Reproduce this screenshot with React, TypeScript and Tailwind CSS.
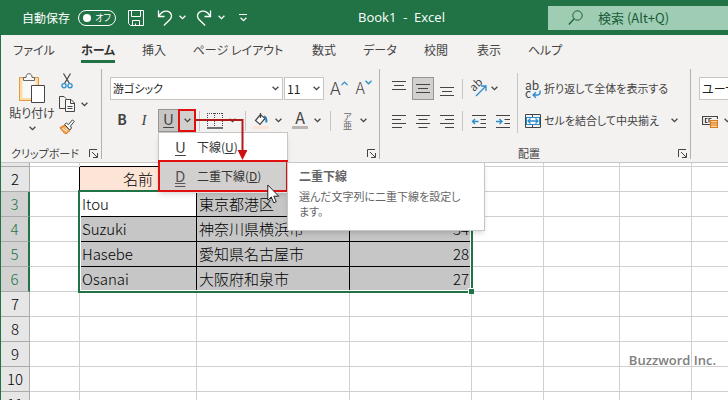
import type { ReactNode } from 'react';

interface Tab {
  label: string;
  width: string;
  active?: boolean;
}

const tabs: Tab[] = [
  { label: 'ファイル', width: 'w-[66px]' },
  { label: 'ホーム', width: 'w-[62px]', active: true },
  { label: '挿入', width: 'w-[50px]' },
  { label: 'ページ レイアウト', width: 'w-[118px]' },
  { label: '数式', width: 'w-[54px]' },
  { label: 'データ', width: 'w-[58px]' },
  { label: '校閲', width: 'w-[54px]' },
  { label: '表示', width: 'w-[52px]' },
  { label: 'ヘルプ', width: 'w-[60px]' },
];

const people = [
  { row: 3, name: 'Itou', address: '東京都港区', age: 25 },
  { row: 4, name: 'Suzuki', address: '神奈川県横浜市', age: 34 },
  { row: 5, name: 'Hasebe', address: '愛知県名古屋市', age: 28 },
  { row: 6, name: 'Osanai', address: '大阪府和泉市', age: 27 },
];

const emptyRows = [7, 8, 9, 10, 11];

interface IconProps {
  children: ReactNode;
  className?: string;
}

const Icon = ({ children, className = 'h-4 w-4' }: IconProps) => (
  <svg
    viewBox="0 0 16 16"
    fill="none"
    stroke="currentColor"
    className={`shrink-0 ${className}`}
    aria-hidden="true"
  >
    {children}
  </svg>
);

const Chevron = ({ className = '' }: { className?: string }) => (
  <svg
    viewBox="0 0 7 5"
    fill="none"
    stroke="currentColor"
    strokeWidth="1.3"
    className={`h-[5px] w-[7px] shrink-0 ${className}`}
    aria-hidden="true"
  >
    <path d="M.6.8 3.5 3.7 6.4.8" />
  </svg>
);

const Separator = ({ className = '' }: { className?: string }) => (
  <span className={`h-5 w-px shrink-0 bg-[#c8c6c4] ${className}`} />
);

interface GroupProps {
  label: string;
  className?: string;
  children: ReactNode;
}

const Group = ({ label, className = '', children }: GroupProps) => (
  <section
    aria-label={label}
    className={`flex h-[90px] shrink-0 flex-col justify-between border-r border-[#b3b0ad] pt-1 ${className}`}
  >
    {children}
    <div className="flex h-3 items-center pr-[2px]">
      <span className="flex-1 text-center text-[11px] leading-3 whitespace-nowrap">
        {label}
      </span>
      <button type="button" aria-label={`${label}の設定`} className="pr-px">
        <svg
          viewBox="0 0 9 9"
          fill="none"
          stroke="#444"
          className="h-[9px] w-[9px]"
          aria-hidden="true"
        >
          <path d="M.5 8V.5H8M3 3l5 5M8.5 4v4.5H4" />
        </svg>
      </button>
    </div>
  </section>
);

const TitleBar = () => (
  <header className="flex h-[35px] items-center bg-[#217346] text-white">
    <label className="flex items-center gap-2 pl-[21px] text-xs">
      自動保存
      <input type="checkbox" role="switch" className="sr-only" />
      <span className="flex h-4 w-[38px] items-center justify-between rounded-full border border-white pr-1 pl-1 text-[9px]">
        <span className="h-2 w-2 rounded-full bg-white" />
        オフ
      </span>
    </label>
    <button type="button" aria-label="上書き保存" className="ml-3">
      <Icon>
        <path d="M.5.5h15v15h-13l-2-2zM3.500.5v6h9v-6M4.500 15.500v-5h7v5M7.500 15.500v-2" />
      </Icon>
    </button>
    <button
      type="button"
      aria-label="元に戻す"
      className="ml-[13px] flex items-center gap-[6px]"
    >
      <Icon>
        <path
          strokeWidth="1.3"
          d="M1.5.5v6h6M1.7 6.300C4 2.500 7 .8 10 1.200c4.500.6 5.800 5.300 3 8.300l-6.200 6"
        />
      </Icon>
      <Chevron />
    </button>
    <button
      type="button"
      aria-label="やり直し"
      className="ml-[10px] flex items-center gap-[6px]"
    >
      <Icon>
        <path
          strokeWidth="1.3"
          d="M14.5.5v6h-6M14.300 6.300C12 2.500 9 .8 6 1.200 1.500 1.800.2 6.500 3 9.500l6.200 6"
        />
      </Icon>
      <Chevron />
    </button>
    <button
      type="button"
      aria-label="クイック アクセス ツール バーのユーザー設定"
      className="ml-[14px] flex flex-col items-center gap-[2px]"
    >
      <span className="h-px w-2 bg-white" />
      <Chevron />
    </button>
    <h1 className="flex-1 pl-2 text-center font-[Open_Sans,Noto_Sans_CJK_JP,sans-serif] text-[13px] whitespace-pre">
      Book1 {' -  '}Excel
    </h1>
    <label className="flex h-6 w-[180px] items-center bg-[#9fcdb3] pl-5 text-[#185c37]">
      <Icon>
        <circle cx="9.5" cy="5.5" r="4.700" />
        <path strokeWidth="1.2" d="M6 9 .8 14.500" />
      </Icon>
      <input
        type="text"
        aria-label="検索"
        placeholder="検索 (Alt+Q)"
        className="ml-[14px] w-full min-w-0 bg-transparent text-[13px] outline-none placeholder:text-[#185c37]"
      />
    </label>
  </header>
);

const Tabs = () => (
  <nav className="flex h-[30px] text-xs">
    {tabs.map((tab) => (
      <button
        key={tab.label}
        type="button"
        className={`flex shrink-0 flex-col items-center whitespace-nowrap ${tab.width}`}
      >
        <span
          className={
            tab.active
              ? 'border-b-3 border-[#217346] pt-[5px] leading-5 font-bold text-[#333]'
              : 'pt-[5px] leading-5'
          }
        >
          {tab.label}
        </span>
      </button>
    ))}
  </nav>
);

const ClipboardGroup = () => (
  <Group label="クリップボード" className="w-[101px]">
    <div className="flex pl-2">
      <button
        type="button"
        className="flex w-[46px] flex-col items-center text-xs leading-5 whitespace-nowrap"
      >
        <svg viewBox="0 0 28 30" fill="none" className="h-[30px] w-7">
          <path fill="#fcdca4" stroke="#dd9b3c" d="M1.5 4.500h19v23h-19z" />
          <path fill="#f8f8f8" d="M4.5 7h13v18h-13z" />
          <path
            fill="#f8f8f8"
            stroke="#666"
            d="M5.5 7.500v-3H8C8 2 9 .7 11 .7S14 2 14 4.500h2.500v3z"
          />
          <path fill="#fff" stroke="#444" d="M13.5 12.500h13v17h-13z" />
        </svg>
        貼り付け
        <Chevron className="mt-[3px]" />
      </button>
      <div className="ml-1 flex flex-col items-start gap-[7px]">
        <button type="button" aria-label="切り取り">
          <Icon>
            <path strokeWidth="1.2" d="M4.5.5l6 10M11.5.5l-6 10" />
            <circle cx="5" cy="12.7" r="2.1" stroke="#2b8dcb" strokeWidth="1.3" />
            <circle cx="11" cy="12.7" r="2.1" stroke="#2b8dcb" strokeWidth="1.3" />
          </Icon>
        </button>
        <button
          type="button"
          aria-label="コピー"
          className="flex items-center gap-[6px]"
        >
          <Icon>
            <path d="M6 12.500H.5V.5H5l2 2" />
            <path
              fill="#f8f8f8"
              d="M6.5 3.500H12L15.500 7v8.500h-9zM11.500 3.500v4h4M8.500 10.500h5M8.500 12.500h5"
            />
          </Icon>
          <Chevron />
        </button>
        <button type="button" aria-label="書式のコピー/貼り付け">
          <Icon>
            <path
              fill="#f0a050"
              stroke="#d97b20"
              d="M1 8.500 6 6l5 5.500-4 3.500C5 14 2.500 11.500 1 8.500z"
            />
            <path stroke="#fff" d="M3.5 9.500l4.500 3M6 8.500l3 3" />
            <path
              fill="#f8f8f8"
              d="M5.5 5.500 7.500 4l2 1.500L13.500.8l1.700 1.700L11.500 7l1 2-1.700 2z"
            />
          </Icon>
        </button>
      </div>
    </div>
  </Group>
);

const Tooltip = () => (
  <div
    role="tooltip"
    className="absolute top-[2px] left-[129px] h-[69px] w-[198px] border border-[#c8c6c4] bg-white pt-[5px] pr-[18px] pl-[11px] text-left whitespace-normal text-[#666] shadow-md"
  >
    <p className="text-xs leading-4 font-bold">二重下線</p>
    <p className="mt-[5px] text-[11px] leading-[15px]">
      選んだ文字列に二重下線を設定します。
    </p>
  </div>
);

const UnderlineMenu = () => (
  <div
    role="menu"
    className="absolute top-[23px] left-0 z-20 w-[130px] border border-[#c8c6c4] bg-white text-xs text-[#333] shadow-md"
  >
    <button
      type="button"
      role="menuitem"
      className="flex h-[27px] w-full items-center pl-4"
    >
      <span className="w-[22px] text-left text-[15px] text-[#444] underline underline-offset-2">
        U
      </span>
      <span>
        下線(<u>U</u>)
      </span>
    </button>
    <div className="relative -mx-px -mb-px">
      <button
        type="button"
        role="menuitem"
        className="flex h-8 w-full items-center border-2 border-[#e01010] bg-[#d2d0ce] pl-[15px]"
      >
        <span className="w-[22px] text-left text-[15px] text-[#555] underline decoration-double underline-offset-1">
          D
        </span>
        <span>
          二重下線(<u>D</u>)
        </span>
      </button>
      <Tooltip />
      <svg
        viewBox="0 0 13 20"
        className="absolute top-6 left-[109px] h-5 w-[13px]"
        aria-hidden="true"
      >
        <path
          fill="#fff"
          stroke="#222"
          d="M.8 1v15.200l3.500-3.200 2.400 5.800 2.500-1-2.400-5.600h4.900z"
        />
      </svg>
    </div>
  </div>
);

const UnderlineButton = () => (
  <div className="relative flex h-[23px]">
    <button
      type="button"
      aria-label="下線"
      className="w-5 border border-r-0 border-[#979593] bg-[#c8c6c4] pb-1 text-[15px] leading-4 underline underline-offset-2"
    >
      U
    </button>
    <button
      type="button"
      aria-label="下線のオプション"
      className="flex w-[18px] items-center justify-center border-2 border-[#e01010] bg-[#d2d0ce]"
    >
      <Chevron />
    </button>
    <UnderlineMenu />
    <svg
      viewBox="0 0 52 42"
      className="absolute top-[9px] left-[37px] z-30 h-[42px] w-[52px]"
      aria-hidden="true"
    >
      <path fill="none" stroke="#b01c1c" strokeWidth="2" d="M0 2h47.500v32" />
      <path fill="#d01010" d="M42.5 32h10l-5 10z" />
    </svg>
  </div>
);

const FontGroup = () => (
  <Group label="フォント" className="w-[278px]">
    <div className="flex flex-col gap-[9px] pt-1 pl-2">
      <div className="flex h-[23px] items-center">
        <label className="relative flex h-full w-[173px] items-center">
          <select
            aria-label="フォント"
            className="h-full w-full appearance-none border border-[#c8c6c4] bg-white pl-[2px] text-[11px] text-[#222]"
          >
            <option>游ゴシック</option>
          </select>
          <Chevron className="pointer-events-none absolute right-1" />
        </label>
        <label className="relative ml-px flex h-full w-10 items-center">
          <select
            aria-label="フォント サイズ"
            className="h-full w-full appearance-none border border-[#c8c6c4] bg-white pl-[2px] text-xs text-[#222]"
          >
            <option>11</option>
          </select>
          <Chevron className="pointer-events-none absolute right-1" />
        </label>
        <button
          type="button"
          aria-label="フォント サイズの拡大"
          className="ml-[6px] flex items-start pb-1 text-[18px] leading-4 font-light"
        >
          A
          <Icon className="h-[7px] w-[7px]">
            <path stroke="#2b8dcb" strokeWidth="3" d="M1 14l7-7 7 7" />
          </Icon>
        </button>
        <button
          type="button"
          aria-label="フォント サイズの縮小"
          className="ml-2 flex items-start pb-1 text-base leading-4 font-light"
        >
          A
          <Icon className="h-[7px] w-[7px]">
            <path stroke="#2b8dcb" strokeWidth="3" d="M1 4l7 7 7-7" />
          </Icon>
        </button>
      </div>
      <div className="flex h-[23px] items-center">
        <button
          type="button"
          aria-label="太字"
          className="w-6 pb-1 text-sm leading-4 font-bold"
        >
          B
        </button>
        <button
          type="button"
          aria-label="斜体"
          className="w-6 pr-1 font-[Liberation_Serif,serif] text-[15px] italic"
        >
          I
        </button>
        <UnderlineButton />
        <Separator className="ml-[3px]" />
        <button
          type="button"
          aria-label="罫線"
          className="ml-[7px] flex items-center gap-[6px]"
        >
          <Icon>
            <path
              strokeDasharray="1 1"
              d="M0 .5h16M0 7.500h16M.5 0v14M7.500 0v14M15.500 0v14"
            />
            <path strokeWidth="1.5" d="M0 15h16" />
          </Icon>
          <Chevron />
        </button>
        <Separator className="ml-[9px]" />
        <button
          type="button"
          aria-label="塗りつぶしの色"
          className="ml-[7px] flex items-center gap-[6px]"
        >
          <Icon>
            <path
              fill="#fff"
              strokeWidth="1.2"
              d="M7.5 1.500 2.500 7.500 7 11.500l5-6zM7.500 0v5"
            />
            <path
              stroke="#2b7fb5"
              strokeWidth="2"
              d="M11 3.500c2.200.5 2.700 2 2.300 6"
            />
            <path stroke="#fce4d6" strokeWidth="3" d="M0 14.500h16" />
          </Icon>
          <Chevron />
        </button>
        <button
          type="button"
          aria-label="フォントの色"
          className="ml-[10px] flex items-center gap-[6px]"
        >
          <span className="flex h-4 w-4 items-center justify-center border-b-3 border-[#b8b6b4] pb-1 text-base leading-3">
            A
          </span>
          <Chevron />
        </button>
        <Separator className="ml-[9px]" />
        <button
          type="button"
          aria-label="ふりがなの表示/非表示"
          className="ml-[10px] flex items-center gap-[6px]"
        >
          <span className="flex w-[13px] flex-col text-center text-[9px] leading-[9px] text-[#666]">
            <span>ア</span>
            <span>亜</span>
          </span>
          <Chevron />
        </button>
      </div>
    </div>
  </Group>
);

interface AlignButtonProps {
  label: string;
  d: string;
  pressed?: boolean;
  arrow?: string;
}

const AlignButton = ({ label, d, pressed, arrow }: AlignButtonProps) => (
  <button
    type="button"
    aria-label={label}
    aria-pressed={pressed}
    className={`flex h-[23px] w-[22px] items-center justify-center ${
      pressed ? 'border border-[#979593] bg-[#d2d0ce]' : ''
    }`}
  >
    <Icon>
      <path strokeWidth="1.2" d={d} />
      {arrow && <path stroke="#2b8dcb" strokeWidth="1.4" d={arrow} />}
    </Icon>
  </button>
);

const AlignmentGroup = () => (
  <Group label="配置" className="w-[311px]">
    <div className="flex pl-2">
      <div className="flex w-[130px] flex-col gap-[9px] border-r border-[#c8c6c4] pt-1 pb-px">
        <div className="flex items-center gap-[2px]">
          <AlignButton label="上揃え" d="M1 .5h14M3 4.500h10M1 8.500h14" />
          <AlignButton
            label="上下中央揃え"
            pressed
            d="M1 3.500h14M3 7.500h10M1 11.500h14"
          />
          <AlignButton label="下揃え" d="M1 6.500h14M3 10.500h10M1 14.500h14" />
          <Separator className="ml-[2px]" />
          <button
            type="button"
            aria-label="方向"
            className="ml-[5px] flex items-center gap-1"
          >
            <svg
              viewBox="0 0 17 17"
              fill="none"
              className="h-[17px] w-[17px]"
              aria-hidden="true"
            >
              <text
                x="4"
                y="12"
                fontSize="11"
                fill="#444"
                transform="rotate(-45 4 12)"
              >
                ab
              </text>
              <path
                stroke="#2b8dcb"
                strokeWidth="1.3"
                d="M6 16 15.500 6.500M11 6h5v5"
              />
            </svg>
            <Chevron />
          </button>
        </div>
        <div className="flex items-center gap-[2px]">
          <AlignButton
            label="左揃え"
            d="M1 2.500h14M1 6.500h9M1 10.500h14M1 14.500h10"
          />
          <AlignButton
            label="中央揃え"
            d="M1 2.500h14M3.500 6.500h9M1 10.500h14M3.500 14.500h9"
          />
          <AlignButton
            label="右揃え"
            d="M1 2.500h14M6 6.500h9M1 10.500h14M6 14.500h9"
          />
          <Separator className="ml-[2px]" />
          <span className="w-px" />
          <AlignButton
            label="インデントを減らす"
            d="M1 2.500h14M9.500 6.500H15M9.500 10.500H15M1 14.500h14"
            arrow="M7.5 8.500h-6M4 6 1.500 8.500 4 11"
          />
          <AlignButton
            label="インデントを増やす"
            d="M1 2.500h14M9.500 6.500H15M9.500 10.500H15M1 14.500h14"
            arrow="M1 8.500h6M4.500 6 7 8.500 4.500 11"
          />
        </div>
      </div>
      <div className="flex flex-col gap-[9px] pt-1 pl-[7px] text-[11px]">
        <button
          type="button"
          className="flex h-[23px] items-center gap-[3px] whitespace-nowrap"
        >
          <span className="relative w-4 text-left text-xs leading-[8px]">
            <span className="block">ab</span>
            <span className="block">c</span>
            <Icon className="absolute right-0 bottom-[-2px] h-[9px] w-[9px]">
              <path
                stroke="#2b8dcb"
                strokeWidth="2.5"
                d="M14 1c1.500 5-1 8-5 8H2M7 4 2 9l5 5"
              />
            </Icon>
          </span>
          折り返して全体を表示する
        </button>
        <button
          type="button"
          className="flex h-[23px] items-center gap-[3px] whitespace-nowrap"
        >
          <Icon>
            <path d="M.5 1.500h15v13H.5zM.5 4.500h15M.5 11.500h15M7.500 1.500v3M7.500 11.500v3" />
            <path fill="#fff" stroke="#2b8dcb" d="M1.5 4.500h13v7h-13z" />
            <path
              stroke="#2b8dcb"
              strokeWidth="1.3"
              d="M3 8h10M5.500 5.500 3 8l2.500 2.500M10.500 5.500 13 8l-2.500 2.500"
            />
          </Icon>
          セルを結合して中央揃え
          <Chevron className="ml-[9px]" />
        </button>
      </div>
    </div>
  </Group>
);

const NumberGroup = () => (
  <Group label="数値" className="w-[220px]">
    <div className="flex flex-col gap-[9px] pt-1 pl-2">
      <select
        aria-label="数値の書式"
        className="h-[23px] w-[120px] appearance-none border border-[#c8c6c4] bg-white pl-[2px] text-xs text-[#222]"
      >
        <option>ユーザー定義</option>
      </select>
      <button
        type="button"
        aria-label="通貨表示形式"
        className="flex h-[23px] items-center gap-[6px] pl-[3px]"
      >
        <Icon>
          <path
            strokeWidth="1.2"
            d="M8 11.500H.5v-8h15V6M5.500 5.500h-2v4h2M7 9.500v-4h2.500"
          />
          <path
            fill="#fbd9b0"
            stroke="#dd7a1b"
            strokeWidth="1.2"
            d="M8.5 7.500h7v7h-7zM8.500 9.800h7M8.500 12h7"
          />
        </Icon>
        <Chevron />
      </button>
    </div>
  </Group>
);

const Ribbon = () => (
  <div className="relative z-10 bg-[#f3f2f1] text-[#444]">
    <Tabs />
    <div className="flex border-b border-[#c8c6c4] pt-1 pb-[3px]">
      <ClipboardGroup />
      <FontGroup />
      <AlignmentGroup />
      <NumberGroup />
    </div>
  </div>
);

const rowHeader = 'border-r border-b border-[#ababab] font-light';
const gridCell = 'border-r border-b border-[#d0d0d0]';

const Sheet = () => (
  <main className="relative">
    <table className="w-full table-fixed border-separate border-spacing-0 text-[15px] leading-6 font-light text-black">
      <colgroup>
        <col className="w-[29px]" />
        <col className="w-[50px]" />
        <col className="w-[117px]" />
        <col className="w-[153px]" />
        <col className="w-[122px]" />
        <col className="w-[72px]" />
        <col className="w-[76px]" />
        <col className="w-[72px]" />
        <col />
      </colgroup>
      <tbody>
        <tr className="h-1">
          <td className="border-r border-b border-[#ababab] bg-[#e6e6e6]" />
          <td className={gridCell} />
          <td className="border-r border-b border-r-[#d0d0d0] border-b-black" />
          <td className="border-r border-b border-r-[#d0d0d0] border-b-black" />
          <td className="border-r border-b border-r-[#d0d0d0] border-b-black" />
          <td className={gridCell} />
          <td className={gridCell} />
          <td className={gridCell} />
          <td className="border-b border-[#d0d0d0]" />
        </tr>
        <tr className="h-[25px]">
          <th scope="row" className={`bg-[#e6e6e6] ${rowHeader}`}>
            2
          </th>
          <td className="border-r border-b border-r-black border-b-[#d0d0d0]" />
          <td className="border-r border-b border-black bg-[#fce4d6] text-center">
            名前
          </td>
          <td className="border-r border-b border-black bg-[#fce4d6]" />
          <td className="border-r border-b border-black bg-[#fce4d6]" />
          <td className={gridCell} />
          <td className={gridCell} />
          <td className={gridCell} />
          <td className="border-b border-[#d0d0d0]" />
        </tr>
        {people.map((person) => (
          <tr key={person.row} className="h-[25px]">
            <th
              scope="row"
              className="border-r-2 border-b border-r-[#217346] border-b-[#ababab] bg-[#d2d2d2] font-light text-[#217346]"
            >
              {person.row}
            </th>
            <td className={gridCell} />
            <td
              className={`border-r border-b border-black pl-[2px] ${
                person.row === 3 ? 'bg-white' : 'bg-[#c6c6c6]'
              }`}
            >
              {person.name}
            </td>
            <td className="border-r border-b border-black bg-[#c6c6c6] pl-[2px]">
              {person.address}
            </td>
            <td className="border-r border-b border-black bg-[#c6c6c6] pr-[2px] text-right">
              {person.age}
            </td>
            <td className={gridCell} />
            <td className={gridCell} />
            <td className={gridCell} />
            <td className="border-b border-[#d0d0d0]" />
          </tr>
        ))}
        {emptyRows.map((row) => (
          <tr key={row} className="h-[25px]">
            <th scope="row" className={`bg-[#e6e6e6] ${rowHeader}`}>
              {row}
            </th>
            <td className={gridCell} />
            <td className={gridCell} />
            <td className={gridCell} />
            <td className={gridCell} />
            <td className={gridCell} />
            <td className={gridCell} />
            <td className={gridCell} />
            <td className="border-b border-[#d0d0d0]" />
          </tr>
        ))}
      </tbody>
    </table>
    {/* selected range B3:D6 */}
    <div className="pointer-events-none absolute top-[27px] left-[77px] h-[103px] w-[395px] border-2 border-[#217346]">
      <div className="h-full border border-white" />
      <span className="absolute -right-[3px] -bottom-[3px] h-[6px] w-[6px] border-t border-l border-white bg-[#217346]" />
    </div>
  </main>
);

export default function App() {
  return (
    <div className="relative h-screen overflow-hidden border-l border-[#217346] bg-white font-[Noto_Sans_CJK_JP,sans-serif] [font-feature-settings:'palt']">
      <TitleBar />
      <Ribbon />
      <Sheet />
      <p className="absolute right-3 bottom-[30px] font-[Open_Sans,sans-serif] text-[13px] leading-5 font-semibold text-[#808080]">
        Buzzword Inc.
      </p>
    </div>
  );
}
